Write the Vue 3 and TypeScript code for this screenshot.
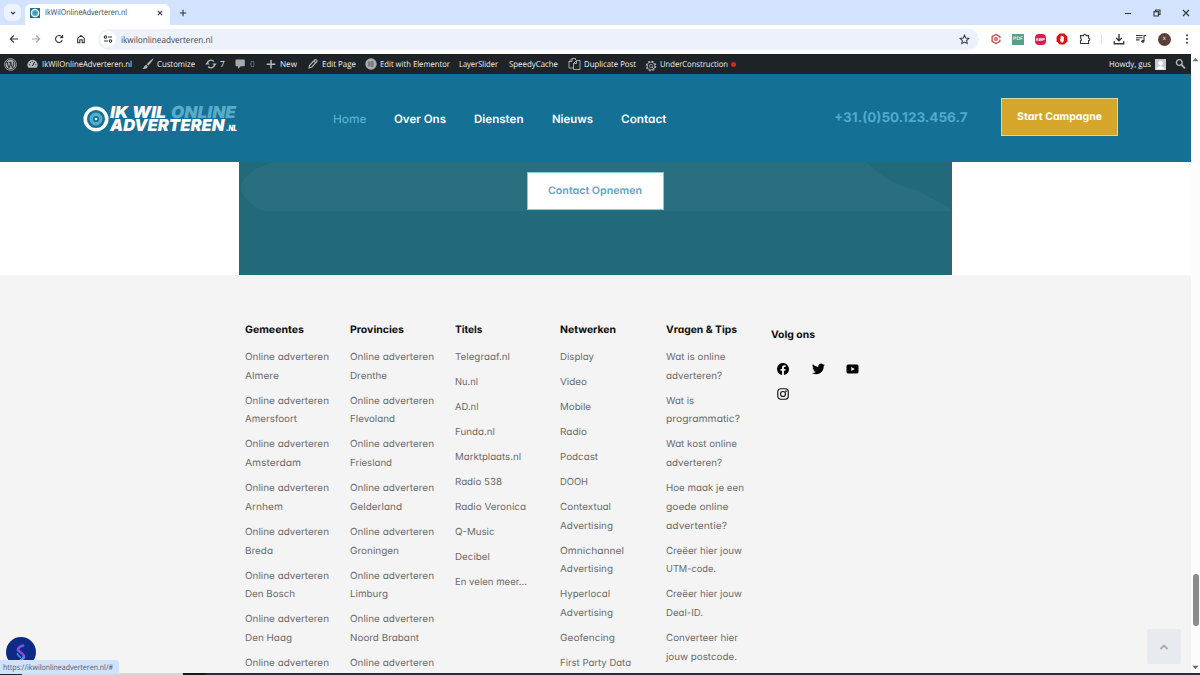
<script setup lang="ts">
// Stretches a label horizontally so that it takes up the given width.
const vFit = {
  mounted(el: HTMLElement, binding: { value: number }) {
    const natural = el.getBoundingClientRect().width
    if (binding.value && natural) {
      el.style.display = 'inline-block'
      el.style.width = `${binding.value}px`
      el.style.transformOrigin = '0 50%'
      el.style.transform = `scaleX(${binding.value / natural})`
    }
  },
}

type Line = [string, number]

interface AdminItem {
  icon?: string
  label?: string
  fit?: number
  span: number
  pad?: number
  dim?: boolean
  dot?: boolean
}

const adminItems: AdminItem[] = [
  { icon: 'wp', span: 23 },
  { icon: 'dash', label: 'IkWilOnlineAdverteren.nl', fit: 90, span: 115, pad: 15 },
  { icon: 'brush', label: 'Customize', fit: 38, span: 63, pad: 15 },
  { icon: 'update', label: '7', fit: 0, span: 30, pad: 15 },
  { icon: 'comment', label: '0', fit: 0, span: 31, pad: 15, dim: true },
  { icon: 'plus', label: 'New', fit: 17, span: 42, pad: 14 },
  { icon: 'pencil', label: 'Edit Page', fit: 34, span: 57, pad: 14 },
  { icon: 'elementor', label: 'Edit with Elementor', fit: 70, span: 94, pad: 15 },
  { label: 'LayerSlider', fit: 39, span: 50 },
  { label: 'SpeedyCache', fit: 49, span: 59 },
  { icon: 'copy', label: 'Duplicate Post', fit: 52, span: 77, pad: 16 },
  { icon: 'gear', label: 'UnderConstruction', fit: 68, span: 100, pad: 15, dot: true },
]

const nav: Line[] = [['Home', 33.5], ['Over Ons', 52], ['Diensten', 49.5], ['Nieuws', 41], ['Contact', 45.5]]

const oa: Line = ['Online adverteren', 84]

const columns: { title: Line; items: Line[][] }[] = [
  {
    title: ['Gemeentes', 59],
    items: [
      [oa, ['Almere', 34]], [oa, ['Amersfoort', 52]], [oa, ['Amsterdam', 56]], [oa, ['Arnhem', 38]],
      [oa, ['Breda', 28]], [oa, ['Den Bosch', 50]], [oa, ['Den Haag', 47]], [oa],
    ],
  },
  {
    title: ['Provincies', 54],
    items: [
      [oa, ['Drenthe', 37]], [oa, ['Flevoland', 45]], [oa, ['Friesland', 42]], [oa, ['Gelderland', 52]],
      [oa, ['Groningen', 49]], [oa, ['Limburg', 38]], [oa, ['Noord Brabant', 69]], [oa],
    ],
  },
  {
    title: ['Titels', 27.5],
    items: [
      [['Telegraaf.nl', 55]], [['Nu.nl', 23]], [['AD.nl', 23.5]], [['Funda.nl', 40]], [['Marktplaats.nl', 66]],
      [['Radio 538', 47]], [['Radio Veronica', 71]], [['Q-Music', 39.5]], [['Decibel', 35]], [['En velen meer...', 72]],
    ],
  },
  {
    title: ['Netwerken', 56],
    items: [
      [['Display', 34]], [['Video', 27]], [['Mobile', 31]], [['Radio', 27]], [['Podcast', 38]], [['DOOH', 28]],
      [['Contextual', 51], ['Advertising', 53]], [['Omnichannel', 64], ['Advertising', 53]],
      [['Hyperlocal', 50], ['Advertising', 53]], [['Geofencing', 55]], [['First Party Data', 71]],
    ],
  },
  {
    title: ['Vragen & Tips', 71],
    items: [
      [['Wat is online', 59.5], ['adverteren?', 56]], [['Wat is', 28], ['programmatic?', 74]],
      [['Wat kost online', 71], ['adverteren?', 56]],
      [['Hoe maak je een', 78], ['goede online', 62.5], ['advertentie?', 61]],
      [['Creëer hier jouw', 76], ['UTM-code.', 50]], [['Creëer hier jouw', 76], ['Deal-ID.', 37]],
      [['Converteer hier', 72], ['jouw postcode.', 71]],
    ],
  },
]
</script>

<template>
  <div class="screen">
    <div class="tabs">
      <span class="tab-search"><svg width="8" height="8" viewBox="0 0 8 8"><path d="M2 3l2 2 2-2" class="ln" /></svg></span>
      <div class="tab">
        <svg class="fav" width="10" height="10" viewBox="0 0 10 10"><rect width="10" height="10" fill="#1a7393" /><circle cx="5" cy="5" r="3.7" fill="#5fb2c8" stroke="#f4fbfd" stroke-width="1.2" /><circle cx="5" cy="5" r="1.3" fill="none" stroke="#1c7799" stroke-width=".7" /></svg>
        <span class="tab-title"><span v-fit="82">IkWilOnlineAdverteren.nl</span></span>
        <svg width="8" height="8" viewBox="0 0 8 8"><path d="M1.8 1.8l4.4 4.4M6.2 1.8L1.8 6.2" class="ln" /></svg>
      </div>
      <svg class="newtab" width="8" height="8" viewBox="0 0 8 8"><path d="M4 .8v6.4M.8 4h6.4" class="ln" /></svg>
      <div class="win">
        <svg width="8" height="8" viewBox="0 0 8 8"><path d="M1 4.5h6" class="ln" /></svg>
        <svg width="8" height="8" viewBox="0 0 8 8"><path d="M1 2.6h4.4V7H1zM2.6 2.4V1H7v4.4H5.6" class="ln" /></svg>
        <svg width="8" height="8" viewBox="0 0 8 8"><path d="M1 1l6 6M7 1L1 7" class="ln" /></svg>
      </div>
    </div>

    <div class="toolbar">
      <svg width="10" height="10" viewBox="0 0 10 10"><path d="M9 5H1.5M4.8 1.5L1.3 5l3.5 3.5" class="ln" /></svg>
      <svg width="10" height="10" viewBox="0 0 10 10"><path d="M1 5h7.5M5.2 1.5L8.7 5 5.2 8.5" class="ln faint" /></svg>
      <svg width="10" height="10" viewBox="0 0 10 10"><path d="M8.3 6.2A3.5 3.5 0 1 1 7.6 2.6L8.5 3.6M8.6 1v2.8H5.8" class="ln" /></svg>
      <svg width="10" height="10" viewBox="0 0 10 10"><path d="M1.7 4.2L5 1.4l3.3 2.8v4.5H6.2V5.8H3.8v2.9H1.7z" class="ln" /></svg>
      <div class="omnibox">
        <span class="site"><svg width="10" height="10" viewBox="0 0 10 10"><g class="ln"><circle cx="2.5" cy="3" r="1.2" /><path d="M5 3h4M1 7h4" /><circle cx="7.5" cy="7" r="1.2" /></g></svg></span>
        <span class="url"><span v-fit="91.5">ikwilonlineadverteren.nl</span></span>
        <svg class="star" width="11" height="11" viewBox="0 0 12 12"><path d="M6 1.3l1.4 3.1 3.4.4-2.5 2.3.7 3.4-3-1.7-3 1.7.7-3.4L1.2 4.8l3.4-.4z" class="ln" /></svg>
      </div>
      <div class="exts">
        <svg width="12" height="12" viewBox="0 0 12 12"><path d="M9.9 5V3.7L6 1.5 2.1 3.7v4.6L6 10.5l3.9-2.2V6.5" fill="none" stroke="#c9463f" stroke-width="1.3" /><circle cx="6" cy="6" r="1.3" fill="none" stroke="#c9463f" stroke-width="1.2" /></svg>
        <span class="pdf">PDF</span>
        <span class="abp">ABP</span>
        <svg width="12" height="12" viewBox="0 0 12 12"><path d="M3.7.6h4.6l3.1 3.1v4.6l-3.1 3.1H3.7L.6 8.3V3.7z" fill="#e00d0d" /><path d="M3.6 5.5l1 .8V3.2h.8V2.5h.8v.5H7v.7h.9v3.6L7 9.4H5z" fill="#fff" /></svg>
        <svg width="12" height="12" viewBox="0 0 12 12"><path d="M1.5 2.6h3a1.3 1.3 0 0 1 2.6 0H9.6v2.6a1.2 1.2 0 0 1 0 2.4v2.9H1.5V7.7a1.3 1.3 0 0 0 0-2.5z" class="ln" /></svg>
      </div>
      <i class="sep"></i>
      <div class="tools">
        <svg width="12" height="12" viewBox="0 0 12 12"><path d="M6 1v6.5M3.2 5L6 7.7 8.8 5M1.3 8.3v2.5h9.400V8.300" class="ln bold" /></svg>
        <svg width="12" height="12" viewBox="0 0 12 12"><path d="M1 2.5h6.5M1 4.7h6.5M1 6.9h3.5M9 8V2.5h2" class="ln" /><circle cx="7.8" cy="8.3" r="1.5" fill="#333a40" /></svg>
        <span class="profile">x</span>
        <svg width="12" height="12" viewBox="0 0 12 12" fill="#333a40"><circle cx="6" cy="2.3" r="1" /><circle cx="6" cy="6" r="1" /><circle cx="6" cy="9.7" r="1" /></svg>
      </div>
    </div>

    <div class="viewport">
      <div class="page">
        <div class="admin">
          <div v-for="(item, i) in adminItems" :key="i" class="admin-item" :style="{ width: item.span + 'px' }">
            <span v-if="item.icon" class="admin-icon" :style="{ width: (item.pad || 15) + 'px' }">
              <svg v-if="item.icon === 'wp'" width="13" height="13" viewBox="0 0 14 14"><circle cx="7" cy="7" r="6.4" fill="none" stroke="#a7aaad" stroke-width=".9" /><circle cx="7" cy="7" r="5.3" fill="#a7aaad" /><path d="M2.3 4.7h2.4M3.3 4.9l2.1 6L7 6.3l-.6-1.5M5.6 4.7h2.6M7.1 4.9l2 6 1.500-4.400c.3-1-.8-1.6-.5-2.6" fill="none" stroke="#1d2327" stroke-width="1" /></svg>
              <svg v-else-if="item.icon === 'dash'" width="11" height="12" viewBox="0 0 11 12"><path d="M1.4 9.8A5 5 0 1 1 9.6 9.8z" fill="#b4b7ba" /><path d="M5.5 8l2-4M2 6.8h1M8.3 6.8h1M3 4l.7.7M5.3 2.7v1" stroke="#1d2327" stroke-width="1" /></svg>
              <svg v-else-if="item.icon === 'brush'" width="12" height="12" viewBox="0 0 12 12" fill="#b4b7ba"><path d="M11.4.6c.5.5-3.8 6-5 7L4.9 6.2C6 4.8 10.9.2 11.4.6zM4.3 6.8l1.4 1.4c-.4 2-2.3 3-5.2 2.6 1.7-.8 1.7-3.6 3.800-4z" /></svg>
              <svg v-else-if="item.icon === 'update'" width="12" height="12" viewBox="0 0 12 12"><path d="M2.3 5.5A3.7 3.7 0 0 1 8.8 3.5M9.7 6.5A3.7 3.7 0 0 1 3.2 8.5" fill="none" stroke="#b4b7ba" stroke-width="1.4" /><path d="M7.3 5.4h4.5L9.7 8zM.2 6.6h4.5L2.3 4z" fill="#b4b7ba" /></svg>
              <svg v-else-if="item.icon === 'comment'" width="11" height="12" viewBox="0 0 11 12"><path d="M1.5 1.5h7.3q1 0 1 1v4.7q0 1-1 1H5.8L3 11V8.2H1.5q-1 0-1-1V2.5q0-1 1-1z" fill="#a7aaad" /></svg>
              <svg v-else-if="item.icon === 'plus'" width="10" height="12" viewBox="0 0 10 12"><path d="M5 2v8.5M.7 6.2h8.6" stroke="#b4b7ba" stroke-width="1.5" /></svg>
              <svg v-else-if="item.icon === 'pencil'" width="10" height="12" viewBox="0 0 10 12"><path d="M1 10l.8-3L6.7 2q1-.8 1.9.1t0 1.8L3.8 9zM5.8 3l1.9 1.9" fill="none" stroke="#b4b7ba" stroke-width="1.1" /></svg>
              <svg v-else-if="item.icon === 'elementor'" width="12" height="12" viewBox="0 0 12 12"><circle cx="6" cy="6" r="5.7" fill="#a7aaad" /><path d="M4 3.5v5M5.500 4h3M5.500 6h3M5.500 8h3" stroke="#40464b" stroke-width=".9" /></svg>
              <svg v-else-if="item.icon === 'copy'" width="13" height="14" viewBox="0 0 13 14"><path d="M5 11H1V4.5L4 1.5h3.5V3M4 1.5v3H1M5.5 6.5l3-3H12v9H5.5zM8.5 3.5v3h-3" fill="none" stroke="#b4b7ba" stroke-width=".9" /></svg>
              <svg v-else class="low" width="12" height="12" viewBox="0 0 12 12"><circle cx="6" cy="6" r="4.7" fill="none" stroke="#a7aaad" stroke-width="1.2" stroke-dasharray="2 1.7" /><circle cx="6" cy="6" r="3.9" fill="none" stroke="#a7aaad" stroke-width=".9" /><circle cx="6" cy="6" r="1.6" fill="none" stroke="#a7aaad" stroke-width=".8" /><path d="M7 7l2 2" stroke="#a7aaad" /></svg>
            </span>
            <span v-if="item.label" v-fit="item.fit || 0" class="admin-text" :class="{ dim: item.dim }">{{ item.label }}</span>
            <i v-if="item.dot" class="dot"></i>
          </div>
          <div class="howdy">
            <span v-fit="42" class="admin-text">Howdy, gus</span>
            <svg class="avatar" width="11" height="11" viewBox="0 0 11 11"><rect width="11" height="11" fill="#c9c9c9" /><circle cx="5.5" cy="4.2" r="2.3" fill="#fff" /><path d="M1.5 10.5q0-3.500 4-3.500t4 3.500z" fill="#fff" /></svg>
            <svg width="11" height="12" viewBox="0 0 11 12"><circle cx="4.3" cy="4.5" r="2.9" fill="none" stroke="#b4b7ba" stroke-width="1.4" /><path d="M6.4 6.6l3.5 3.7" stroke="#b4b7ba" stroke-width="1.7" /></svg>
          </div>
        </div>

        <header class="header">
          <div class="logo">
            <svg width="26" height="26" viewBox="0 0 26 26"><circle cx="13" cy="13" r="10.8" fill="none" stroke="#fff" stroke-width="3.5" /><circle cx="13" cy="13" r="4.8" fill="none" stroke="#55adcb" stroke-width="3.4" /><circle cx="13" cy="13" r="1.3" fill="#fff" /></svg>
            <div class="words">
              <div class="row"><span v-fit="56">IK WIL</span><span v-fit="65" class="blue">ONLINE</span></div>
              <div class="row"><span v-fit="114.5">ADVERTEREN</span><small v-fit="11">.NL</small></div>
            </div>
          </div>
          <nav class="nav">
            <a v-for="(n, i) in nav" :key="n[0]" v-fit="n[1]" :class="{ active: i === 0 }">{{ n[0] }}</a>
          </nav>
          <span class="phone"><span v-fit="133.5">+31.(0)50.123.456.7</span></span>
          <a class="start"><span v-fit="85">Start Campagne</span></a>
        </header>

        <section class="cta">
          <div class="panel">
            <svg class="shape" width="713" height="49" viewBox="0 0 713 49"><path d="M36 0H628C646 20 664 24 680 29L711 46.5V49H24C10 42 2 33 2 25 2 14 17 5 36 0z" fill="#296f7f" /></svg>
            <a class="contact"><span v-fit="94">Contact Opnemen</span></a>
          </div>
        </section>

        <footer class="footer">
          <div v-for="c in columns" :key="c.title[0]" class="col">
            <h4><span v-fit="c.title[1]">{{ c.title[0] }}</span></h4>
            <ul>
              <li v-for="(item, i) in c.items" :key="i">
                <div v-for="(l, j) in item" :key="j" class="line"><span v-fit="l[1]">{{ l[0] }}</span></div>
              </li>
            </ul>
          </div>
          <div class="col social">
            <h4><span v-fit="44">Volg ons</span></h4>
            <div class="icons">
              <svg width="12" height="12" viewBox="0 0 24 24"><path d="M24 12A12 12 0 1 0 10.1 23.9v-8.4H7.1V12h3V9.4c0-3 1.8-4.7 4.5-4.7 1.3 0 2.7.2 2.7.2v3h-1.500c-1.500 0-2 .9-2 1.900V12h3.400l-.5 3.500h-2.900v8.400A12 12 0 0 0 24 12z" /></svg>
              <svg width="13" height="12" viewBox="0 0 24 22"><path d="M24 3.5a10 10 0 0 1-2.8.8 4.9 4.9 0 0 0 2.1-2.7 10 10 0 0 1-3.1 1.2 4.9 4.9 0 0 0-8.4 4.5A14 14 0 0 1 1.7 2.1a4.9 4.9 0 0 0 1.5 6.6A5 5 0 0 1 1 8.1a4.9 4.9 0 0 0 3.9 4.9 5 5 0 0 1-2.2.1 4.9 4.9 0 0 0 4.6 3.4A10 10 0 0 1 0 18.500 14 14 0 0 0 21.500 6z" /></svg>
              <svg width="13" height="12" viewBox="0 0 26 24"><path d="M4 3h18q3 0 3 4v10q0 4-3 4H4q-3 0-3-4V7q0-4 3-4z" /><path d="M10.5 8v8l7-4z" fill="#f4f4f4" /></svg>
              <svg width="12" height="12" viewBox="0 0 24 24" fill="none" stroke="#111" stroke-width="2.3"><rect x="1.5" y="1.5" width="21" height="21" rx="6" /><circle cx="12" cy="12" r="5" /><circle cx="18" cy="6" r=".6" /></svg>
            </div>
          </div>
        </footer>
      </div>
      <div class="scroll">
        <svg width="7" height="5" viewBox="0 0 7 5"><path d="M.5 4.2L3.5.8l3 3.4z" fill="#777" /></svg>
        <i class="thumb"></i>
        <svg width="7" height="5" viewBox="0 0 7 5"><path d="M.5.8l3 3.4 3-3.4z" fill="#666" /></svg>
      </div>
    </div>
    <div class="edge"><i class="e1"></i><i class="e2"></i><i class="e3"></i></div>

    <div class="badge">
      <svg width="30" height="30" viewBox="0 0 30 30"><defs><linearGradient id="swirl" x1="0" y1="0" x2="0" y2="1"><stop offset="0" stop-color="#7658e8" /><stop offset=".55" stop-color="#b238df" /><stop offset="1" stop-color="#27bff0" /></linearGradient></defs><circle cx="15" cy="15" r="15" fill="#0d2b86" /><path d="M17 8.500c-5 1.500-6.500 4-3.500 6s5 3.500 4.500 5.500-3 2.500-4 4" fill="none" stroke="url(#swirl)" stroke-width="2.600" stroke-linecap="round" /><path d="M11.500 16c-.5 2.500 1.500 3 3.500 4.500" fill="none" stroke="#239be5" stroke-width="1.600" /></svg>
    </div>
    <div class="status"><span v-fit="110">https://ikwilonlineadverteren.nl/#</span></div>
    <div class="totop"><svg width="10" height="8" viewBox="0 0 10 8"><path d="M1.5 6L5 2.6 8.5 6" fill="none" stroke="#a9adb1" stroke-width="1.9" /></svg></div>
  </div>
</template>

<style>
html, body { overflow: hidden; background: #fff; }
</style>

<style scoped>
.screen { position: relative; width: 1200px; height: 675px; overflow: hidden; display: flex; flex-direction: column; background: #fff; font-family: "Open Sans", "Noto Sans", sans-serif; text-rendering: geometricPrecision; }
.screen * { box-sizing: border-box; }
svg { display: block; flex: none; }
span { white-space: nowrap; }
.ln { fill: none; stroke: #33383d; stroke-width: 1.1; }
.faint { stroke: #a4a7ab; }
.bold { stroke-width: 1.4; }

.tabs { height: 25px; flex: none; background: #d3e2fd; display: flex; align-items: center; padding-left: 4px; }
.tab-search { width: 17px; height: 17px; border-radius: 6px; background: #edf3fe; display: flex; align-items: center; justify-content: center; }
.tab { margin-left: 4px; width: 145px; height: 21px; margin-top: 4px; padding: 0 6px 4px 5px; background: #fff; border-radius: 6px 6px 0 0; display: flex; align-items: center; }
.tab-title { flex: 1; margin-left: 5px; padding-top: 1px; font-size: 8.2px; color: #3c4146; line-height: 12px; }
.newtab { margin-left: 9px; }
.win { margin-left: auto; display: flex; gap: 21px; margin-right: 10px; }

.toolbar { height: 29.3px; flex: none; background: #fff; display: flex; align-items: center; padding-left: 8.5px; gap: 12.5px; padding-bottom: 1px; border-radius: 0 6px 0 0; }
.omnibox { width: 881px; height: 21px; border-radius: 11px; background: #edf1fa; display: flex; align-items: center; padding: 0 9.5px 0 2px; margin-left: -0.5px; }
.site { width: 16px; height: 16px; border-radius: 50%; background: #fff; display: flex; align-items: center; justify-content: center; }
.url { flex: 1; margin-left: 4.5px; padding-top: 1px; font-size: 8.9px; color: #42474c; line-height: 12px; }
.exts { display: flex; gap: 10.6px; margin-left: -2px; align-items: center; }
.pdf { width: 12px; height: 11px; background: #5c9d86; color: #d9eee6; font: 700 5px/11px "Liberation Sans", sans-serif; text-align: center; }
.abp { width: 11px; height: 11px; border-radius: 4px; background: #dc1c4b; color: #fff; font: 700 4.5px/11px "Liberation Sans", sans-serif; text-align: center; }
.sep { width: 1px; height: 10px; background: #d3e0f8; margin-left: -2px; }
.tools { display: flex; gap: 10.3px; align-items: center; margin-left: -1.8px; }
.profile { width: 13px; height: 13px; border-radius: 50%; background: #5a4038; color: #eee; font: 6px/12px "Liberation Sans", sans-serif; text-align: center; }

.viewport { flex: 1; min-height: 0; display: flex; }
.page { width: 1191px; display: flex; flex-direction: column; min-height: 0; overflow: hidden; }
.admin { height: 20px; flex: none; background: #1d2327; display: flex; align-items: center; padding-left: 4px; font-size: 8.3px; color: #f0f0f1; font-weight: 500; line-height: 20px; }
.admin-item { display: flex; align-items: center; flex: none; height: 20px; }
.admin-icon { display: flex; flex: none; }
.admin-text { margin-top: 2px; }
.low { margin-top: 3px; }
.dim { color: #85898d; }
.dot { width: 5px; height: 5px; border-radius: 50%; background: #e2231c; margin-left: 3px; margin-top: 1px; }
.howdy { margin-left: auto; display: flex; align-items: center; padding-right: 5px; }
.avatar { margin: 0 9px 0 4px; }

.header { height: 88px; flex: none; background: #147095; display: flex; align-items: center; padding-left: 83px; font-family: Inter, sans-serif; font-feature-settings: "cv11"; }
.logo { width: 249.5px; display: flex; align-items: center; padding-top: 1px; }
.words { margin-left: 1px; font: italic 900 16.5px/13px Inter, sans-serif; color: #fff; }
.row { display: flex; height: 13px; align-items: baseline; }
.blue { color: #55adcb; margin-left: 5px; }
.row small { font-size: 8.5px; margin-left: 1px; }
.nav { width: 501.5px; display: flex; gap: 28px; font-size: 11.5px; font-weight: 600; color: #fff; white-space: nowrap; padding-top: 1px; }
.nav .active { color: #55b0d2; font-weight: 500; }
.phone { width: 167px; font-size: 13.4px; font-weight: 700; color: #50aad0; margin-top: -1px; }
.start { width: 117px; height: 38px; margin-top: -2px; border: 1px solid #d9d7a4; background: #d5a629; color: #fff; font-size: 10.4px; font-weight: 700; display: flex; align-items: center; padding: 0 0 1px 15px; }

.cta { height: 113px; flex: none; padding-left: 239px; }
.panel { position: relative; width: 713px; height: 113px; background: #226a79; padding: 10px 0 0 287.5px; }
.shape { position: absolute; left: 0; top: 0; }
.contact { position: relative; width: 137.5px; height: 38px; background: #fff; border: 1px solid #8dc5da; display: flex; align-items: center; padding: 0 0 0 20.5px; font: 600 10.3px Inter, sans-serif; font-feature-settings: "cv11"; color: #58a5c4; }

.footer { flex: 1; min-height: 0; overflow: hidden; background: #f4f4f4; padding: 45.3px 0 0 245px; display: flex; font-family: Inter, sans-serif; font-feature-settings: "cv11"; }
.col { width: 105.15px; flex: none; }
h4 { margin: 0; height: 19px; line-height: 19px; font-size: 10.2px; font-weight: 700; color: #0b0b0b; }
ul { list-style: none; margin: 9.4px 0 0; padding: 0; }
li { margin-bottom: 6.25px; }
.line { height: 18.75px; line-height: 18.75px; font-size: 9.7px; color: #6c6c6c; font-weight: 400; }
.social { padding-top: 5px; }
.icons { display: grid; grid-template-columns: 34.3px 34px 34px; row-gap: 13px; padding: 18px 0 0 6.5px; }

.scroll { width: 9px; background: #fcfcfc; display: flex; flex-direction: column; align-items: center; padding: 3px 0 3px; }
.thumb { width: 6px; height: 52px; border-radius: 3px; background: #8b8b8b; margin-top: 512px; margin-bottom: auto; }
.edge { height: 1.7px; flex: none; background: #292d31; display: flex; }
.e1 { width: 22px; background: #222; }
.e2 { width: 161px; background: #d7d7d9; }
.e3 { width: 23px; background: #18191b; }

.badge { position: absolute; left: 6px; top: 637px; }
.status { position: absolute; left: 0; top: 660px; width: 118.5px; height: 14px; background: #d3e2fb; border-radius: 0 3px 0 0; font-size: 8px; line-height: 15.5px; padding-left: 3px; color: #4c5a6d; }
.totop { position: absolute; left: 1147px; top: 629px; width: 34px; height: 35px; border-radius: 2px; background: #e7ebef; display: flex; align-items: center; justify-content: center; }
</style>
